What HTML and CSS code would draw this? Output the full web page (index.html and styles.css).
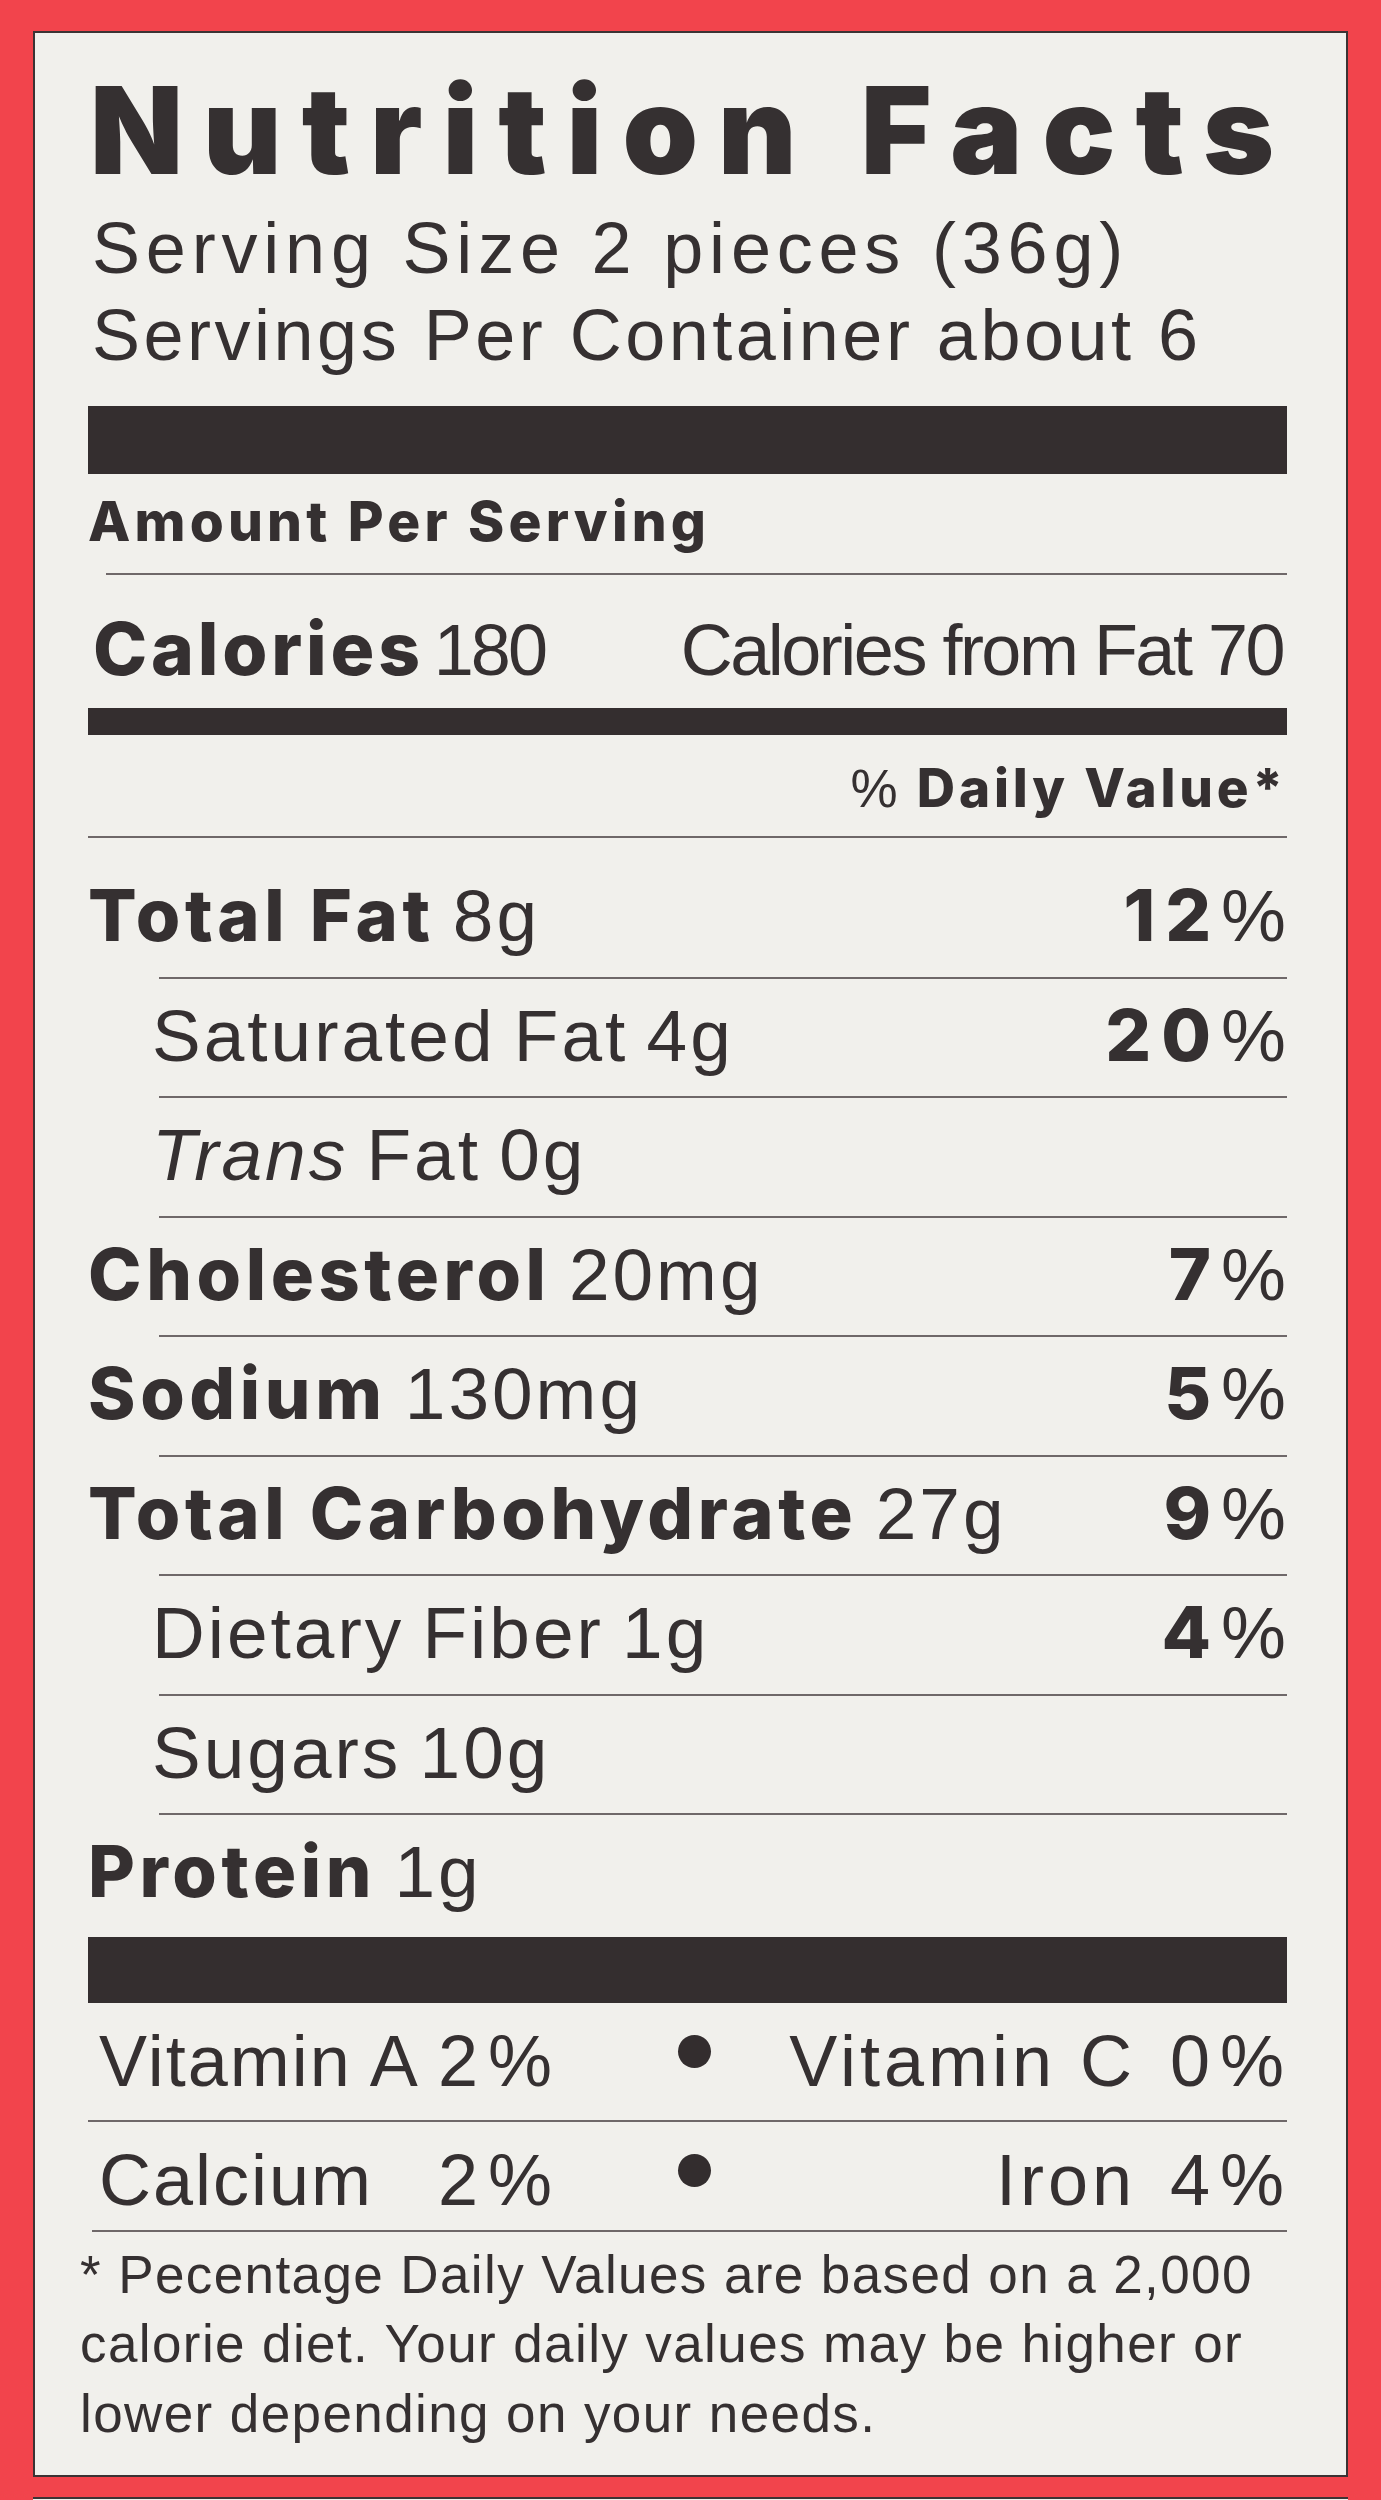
FILE: index.html
```html
<!DOCTYPE html>
<html lang="en">
<head>
  <meta charset="UTF-8">
  <title>Nutrition Facts</title>
  <link rel="stylesheet" href="styles.css">
</head>
<body>
<div class="label">
  <h1 class="title">Nutrition Facts</h1>
  <div class="serving serving-size">Serving Size 2 pieces (36g)</div>
  <div class="serving serving-count">Servings Per Container about 6</div>

  <div class="bar bar-top"></div>
  <div class="amount">Amount Per Serving</div>
  <div class="rule rule-amount"></div>

  <div class="calories">
    <span><b>Calories</b> <span class="cal-amt">180</span></span>
    <span class="cal-fat">Calories from Fat 70</span>
  </div>
  <div class="bar bar-mid"></div>

  <div class="dv-head"><span class="pct">%</span> Daily Value*</div>
  <div class="rule"></div>

  <div class="nutrients">
    <div class="row">
      <span><b>Total Fat</b> 8g</span>
      <span class="dv"><b>12</b>%</span>
    </div>
    <div class="rule rule-sub"></div>
    <div class="row sub">
      <span>Saturated Fat 4g</span>
      <span class="dv"><b>20</b>%</span>
    </div>
    <div class="rule rule-sub"></div>
    <div class="row sub">
      <span><i>Trans</i> Fat 0g</span>
    </div>
    <div class="rule rule-sub"></div>
    <div class="row">
      <span><b>Cholesterol</b> 20mg</span>
      <span class="dv"><b>7</b>%</span>
    </div>
    <div class="rule rule-sub"></div>
    <div class="row">
      <span><b>Sodium</b> 130mg</span>
      <span class="dv"><b>5</b>%</span>
    </div>
    <div class="rule rule-sub"></div>
    <div class="row">
      <span><b>Total Carbohydrate</b> 27g</span>
      <span class="dv"><b>9</b>%</span>
    </div>
    <div class="rule rule-sub"></div>
    <div class="row sub">
      <span>Dietary Fiber 1g</span>
      <span class="dv"><b>4</b>%</span>
    </div>
    <div class="rule rule-sub"></div>
    <div class="row sub">
      <span>Sugars 10g</span>
    </div>
    <div class="rule rule-sub"></div>
    <div class="row">
      <span><b>Protein</b> 1g</span>
    </div>
  </div>

  <div class="bar bar-bottom"></div>

  <div class="vit">
    <span>Vitamin A</span>
    <span class="pct">2%</span>
    <span class="dot"></span>
    <span class="name2">Vitamin C</span>
    <span class="pct pct2">0%</span>
  </div>
  <div class="rule"></div>
  <div class="vit last">
    <span>Calcium</span>
    <span class="pct">2%</span>
    <span class="dot"></span>
    <span class="name2">Iron</span>
    <span class="pct pct2">4%</span>
  </div>
  <div class="rule rule-last"></div>

  <p class="note">* Pecentage Daily Values are based on a 2,000<br>calorie diet. Your daily values may be higher or<br>lower depending on your needs.</p>
</div>
<div class="next"></div>
</body>
</html>
```

FILE: styles.css
```css
body {
  margin: 0;
  height: 2500px;
  overflow: hidden;
  background-color: #f2444c;
  font-family: "Liberation Sans", Arial, Helvetica, sans-serif;
  color: #353031;
}
.label {
  box-sizing: border-box;
  width: 1315px;
  height: 2446px;
  margin: 31px 0 0 33px;
  padding: 23px 59px 0 53px;
  background-color: #f1f0ec;
  border: 2px solid #3c3334;
}
.title {
  margin: 0 0 0 2px;
  font-family: Inter, "Liberation Sans", sans-serif;
  font-size: 121px;
  line-height: 149px;
  font-weight: 900;
  letter-spacing: 20px;
  white-space: nowrap;
}
.serving {
  margin-left: 4px;
  font-size: 72px;
  line-height: 87px;
  white-space: nowrap;
}
.serving-size {
  letter-spacing: 5.8px;
}
.serving-count {
  letter-spacing: 3.5px;
}
.bar {
  background-color: #342e2f;
}
.bar-top {
  margin-top: 27px;
  height: 68px;
}
.bar-mid {
  height: 27px;
}
.bar-bottom {
  margin-top: 4px;
  height: 66px;
}
.rule {
  height: 2px;
  background-color: #6f6869;
}
.rule-amount {
  margin-left: 18px;
}
.rule-sub {
  margin-left: 71px;
}
.rule-last {
  margin-left: 4px;
}
b,
.amount,
.dv-head {
  font-family: Inter, "Liberation Sans", sans-serif;
  font-weight: 800;
}
b {
  line-height: 1;
  word-spacing: 0;
}
.amount {
  font-size: 55px;
  letter-spacing: 4.2px;
  line-height: 95px;
  padding-bottom: 4px;
}
.calories {
  display: flex;
  justify-content: space-between;
  align-items: baseline;
  padding: 17px 4px 0 5px;
  font-size: 72px;
  line-height: 116px;
  white-space: nowrap;
}
.calories b {
  font-size: 73px;
  letter-spacing: 3.8px;
}
.cal-amt {
  margin-left: -10px;
  letter-spacing: -3px;
}
.cal-fat {
  letter-spacing: -2.5px;
}
.dv-head {
  text-align: right;
  font-size: 53px;
  letter-spacing: 3.8px;
  line-height: 95px;
  padding-top: 6px;
}
.dv-head .pct {
  font-family: "Liberation Sans", Arial, sans-serif;
  font-weight: normal;
}
.nutrients {
  margin-top: 21px;
}
.row {
  display: flex;
  justify-content: space-between;
  align-items: baseline;
  font-size: 73px;
  line-height: 114.5px;
  padding-bottom: 3px;
  letter-spacing: 3px;
  word-spacing: -5px;
  white-space: nowrap;
}
.row b {
  font-size: 72px;
  letter-spacing: 4.6px;
}
.row.sub {
  padding-left: 64px;
}
.dv {
  letter-spacing: 6px;
  margin-right: -5px;
}
.row .dv b {
  letter-spacing: 10px;
}
.vit {
  display: grid;
  grid-template-columns: 339px 240px 33px 1fr 158px;
  align-items: baseline;
  margin-right: -7px;
  padding: 9px 0 10px 11px;
  font-size: 72px;
  line-height: 98px;
  letter-spacing: 2px;
  white-space: nowrap;
}
.vit.last {
  padding-bottom: 1px;
}
.vit .pct {
  letter-spacing: 10px;
}
.vit .name2,
.vit .pct2 {
  text-align: right;
}
.vit .name2 {
  letter-spacing: 4px;
}
.dot {
  align-self: center;
  width: 33px;
  height: 33px;
  margin-bottom: 18px;
  border-radius: 50%;
  background-color: #332d2e;
}
.note {
  margin: 0 0 0 -8px;
  padding-top: 8px;
  font-size: 53px;
  line-height: 69.5px;
  letter-spacing: 1.4px;
  white-space: nowrap;
}
.next {
  box-sizing: border-box;
  width: 1315px;
  height: 3px;
  margin: 20px 0 0 33px;
  background-color: #f1f0ec;
  border-top: 2px solid #3c3334;
}
```
